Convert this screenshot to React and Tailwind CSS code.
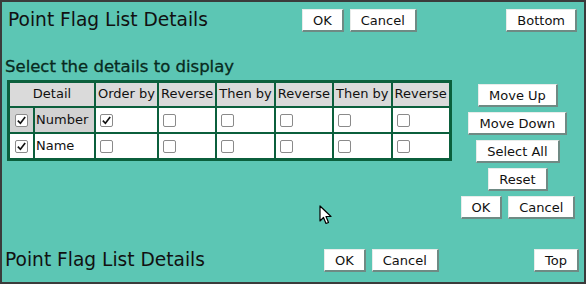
import React from 'react';

const font = { fontFamily: '"DejaVu Sans", Verdana, sans-serif' };

const Btn = ({ children, className = '' }) => (
  <button
    className={`h-[23px] bg-white px-[10px] text-[13px] leading-none text-[#111] border border-[#e8ecea] border-r-2 border-b-2 border-r-[#6f8a84] border-b-[#6f8a84] ${className}`}
  >
    {children}
  </button>
);

const Box = ({ checked }) => (
  <span className="inline-flex h-[13px] w-[13px] items-center justify-center rounded-[2px] border border-[#8a8a8a] bg-white align-middle">
    {checked && (
      <svg viewBox="0 0 12 12" className="h-[11px] w-[11px]">
        <path d="M2 6.2 L4.8 9 L10 2.2" fill="none" stroke="#111" strokeWidth="1.8" />
      </svg>
    )}
  </span>
);

const cols = ['Order by', 'Reverse', 'Then by', 'Reverse', 'Then by', 'Reverse'];

const rows = [
  { name: 'Number', on: true, sel: true, order: true },
  { name: 'Name', on: true, sel: false, order: false },
];

export default function App() {
  return (
    <div
      style={font}
      className="relative flex h-[284px] w-[586px] flex-col border-2 border-[#3b3b3b] bg-[#5cc6b4] text-[#111]"
    >
      <div className="flex items-center pt-[7px]">
        <h1 className="w-[300px] pl-[6px] text-[18.6px] leading-none">Point Flag List Details</h1>
        <div className="flex gap-[6px]">
          <Btn>OK</Btn>
          <Btn>Cancel</Btn>
        </div>
        <Btn className="ml-auto mr-[7px]">Bottom</Btn>
      </div>

      <div className="flex">
        <div className="pl-[3px]">
          <h2 className="mt-[27px] text-[16.5px] leading-none text-[#082a20] [-webkit-text-stroke:0.3px_#082a20]">Select the details to display</h2>
          <table className="mt-[4px] ml-[2px] border-separate border-spacing-[2px] border border-[#0b5f3c] bg-[#0b5f3c] text-[13px]">
            <thead>
              <tr>
                <th colSpan={2} className="h-[23px] bg-[#dadada] px-[2px] font-normal">Detail</th>
                {cols.map((c, i) => (
                  <th key={i} className="h-[23px] bg-[#dadada] px-[2px] font-normal whitespace-nowrap">{c}</th>
                ))}
              </tr>
            </thead>
            <tbody>
              {rows.map((r) => (
                <tr key={r.name}>
                  <td className={`h-[24px] w-[23px] text-center ${r.sel ? 'bg-[#d2d2d2]' : 'bg-white'}`}>
                    <Box checked={r.on} />
                  </td>
                  <td className={`h-[24px] w-[59px] pl-[1px] ${r.sel ? 'bg-[#d2d2d2]' : 'bg-white'}`}>{r.name}</td>
                  {cols.map((c, i) => (
                    <td key={i} className="h-[24px] bg-white pl-[4px]">
                      <Box checked={i === 0 && r.order} />
                    </td>
                  ))}
                </tr>
              ))}
            </tbody>
          </table>
        </div>

        <div className="flex flex-1 flex-col items-center gap-[5px] pt-[52px]">
          <Btn>Move Up</Btn>
          <Btn>Move Down</Btn>
          <Btn>Select All</Btn>
          <Btn>Reset</Btn>
          <div className="flex gap-[6px]">
            <Btn>OK</Btn>
            <Btn>Cancel</Btn>
          </div>
        </div>
      </div>

      <div className="mt-auto flex items-center pb-[10px]">
        <h1 className="w-[322px] pl-[3px] text-[18.6px] leading-none">Point Flag List Details</h1>
        <div className="flex gap-[6px]">
          <Btn>OK</Btn>
          <Btn>Cancel</Btn>
        </div>
        <Btn className="ml-auto mr-[5px]">Top</Btn>
      </div>

      <svg className="absolute left-[317px] top-[203px]" width="14" height="20" viewBox="0 0 14 20">
        <path d="M1 1 L1 16 L4.5 12.5 L7 18.5 L9.5 17.5 L7 11.5 L12 11.5 Z" fill="#fff" stroke="#000" strokeWidth="1.2" strokeLinejoin="round" />
      </svg>
    </div>
  );
}
